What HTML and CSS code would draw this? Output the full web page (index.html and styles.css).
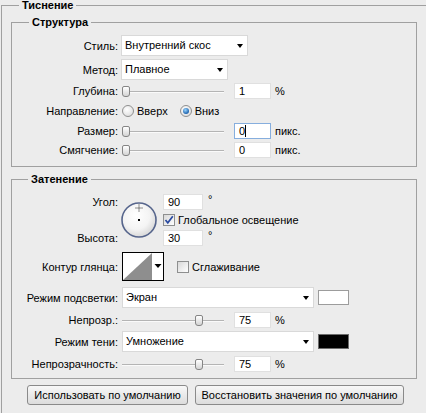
FILE: index.html
```html
<!DOCTYPE html>
<html lang="ru">
<head>
    <meta charset="UTF-8">
    <title>Тиснение</title>
    <link rel="stylesheet" href="styles.css">
</head>
<body>
<fieldset class="group outer">
    <legend>Тиснение</legend>

    <fieldset class="group structure">
        <legend>Структура</legend>

        <div class="row tall">
            <span class="label">Стиль:</span>
            <div class="select style-select">Внутренний скос</div>
        </div>
        <div class="row tall">
            <span class="label">Метод:</span>
            <div class="select method-select">Плавное</div>
        </div>
        <div class="row">
            <span class="label">Глубина:</span>
            <div class="slider"><span class="thumb" style="left:0px"></span></div>
            <span class="field">1</span>
            <span class="unit">%</span>
        </div>
        <div class="row radios">
            <span class="label">Направление:</span>
            <span class="radio"></span><span class="opt">Вверх</span>
            <span class="radio on"></span><span class="opt">Вниз</span>
        </div>
        <div class="row">
            <span class="label">Размер:</span>
            <div class="slider"><span class="thumb" style="left:0px"></span></div>
            <span class="field focus">0<i class="caret"></i></span>
            <span class="unit">пикс.</span>
        </div>
        <div class="row">
            <span class="label">Смягчение:</span>
            <div class="slider"><span class="thumb" style="left:0px"></span></div>
            <span class="field">0</span>
            <span class="unit">пикс.</span>
        </div>
    </fieldset>

    <fieldset class="group shading">
        <legend>Затенение</legend>

        <div class="angle">
            <span class="label angle-label">Угол:</span>
            <svg class="dial" width="36" height="36" viewBox="0 0 36 36">
                <defs>
                    <radialGradient id="dialFill" cx="42%" cy="38%" r="65%">
                        <stop offset="0" stop-color="#ffffff"/>
                        <stop offset="0.6" stop-color="#f4f4f4"/>
                        <stop offset="1" stop-color="#d6d6d6"/>
                    </radialGradient>
                </defs>
                <circle cx="18" cy="18" r="17" fill="url(#dialFill)" stroke="#56658c" stroke-width="1.6"/>
                <path d="M18 2.5v7M14.5 6h7" stroke="#222" stroke-width="1" stroke-dasharray="1 1"/>
                <rect x="17" y="17" width="2" height="2" fill="#000"/>
            </svg>
            <div class="row angle-value">
                <span class="field wide">90</span>
                <span class="deg">°</span>
            </div>
            <div class="row global">
                <span class="check on">
                    <svg width="10" height="10" viewBox="0 0 10 10"><path d="M1.5 5l2.3 2.8L8.8 1.2" fill="none" stroke="#2a4aa0" stroke-width="1.7"/></svg>
                </span>
                <span class="opt">Глобальное освещение</span>
            </div>
            <span class="label height-label">Высота:</span>
            <div class="row height-value">
                <span class="field wide">30</span>
                <span class="deg">°</span>
            </div>
        </div>

        <div class="row contour-row">
            <span class="label">Контур глянца:</span>
            <svg class="contour" width="42" height="29" viewBox="0 0 42 29">
                <rect x="0.5" y="0.5" width="41" height="28" fill="#fff" stroke="#000"/>
                <polygon points="1,28 30,1 30,28" fill="#8e8e8e"/>
                <polygon points="32.5,12 39.5,12 36,16" fill="#000"/>
            </svg>
            <span class="check smooth"></span>
            <span class="opt">Сглаживание</span>
        </div>

        <div class="row tall gap6">
            <span class="label">Режим подсветки:</span>
            <div class="select mode-select">Экран</div>
            <span class="swatch"></span>
        </div>
        <div class="row gap4">
            <span class="label">Непрозр.:</span>
            <div class="slider"><span class="thumb" style="left:73px"></span></div>
            <span class="field">75</span>
            <span class="unit">%</span>
        </div>
        <div class="row tall">
            <span class="label">Режим тени:</span>
            <div class="select mode-select">Умножение</div>
            <span class="swatch black"></span>
        </div>
        <div class="row gap4">
            <span class="label">Непрозрачность:</span>
            <div class="slider"><span class="thumb" style="left:73px"></span></div>
            <span class="field">75</span>
            <span class="unit">%</span>
        </div>
    </fieldset>

    <div class="buttons">
        <button class="btn default-btn">Использовать по умолчанию</button>
        <button class="btn reset-btn">Восстановить значения по умолчанию</button>
    </div>
</fieldset>
</body>
</html>
```

FILE: styles.css
```css
body {
    margin: 0;
    background: #ececec;
    font-family: "Liberation Sans", Arial, sans-serif;
    font-size: 11px;
    color: #000;
    overflow: hidden;
}
.group {
    border: 1px solid #a0a0a0;
    margin: 0;
    padding: 0;
    min-inline-size: 0;
}
.group legend {
    font-weight: bold;
    padding: 0 3px;
    line-height: 13px;
    margin-left: 17px;
}
.outer {
    margin: 0 0 0 1px;
    border-right: none;
    border-bottom: none;
    padding: 5px 9px 9px 9px;
}
.outer > legend {
    line-height: 11px;
    margin-left: 8px;
}
.structure {
    padding: 6px 0 8px;
}
.shading {
    margin-top: 6px;
    padding: 8px 0 6px;
}
.shading > legend {
    margin-left: 16px;
}
.row {
    display: flex;
    align-items: center;
    height: 16px;
}
.row + .row {
    margin-top: 3px;
}
.row.tall {
    height: 21px;
}
.row.radios {
    height: 18px;
}
.row.gap4 {
    margin-top: 4px;
}
.row.gap6 {
    margin-top: 6px;
}
.label {
    width: 106px;
    margin-right: 3px;
    text-align: right;
    flex: none;
    white-space: nowrap;
}
.select {
    position: relative;
    height: 21px;
    box-sizing: border-box;
    background: #fff;
    border: 1px solid #d9d9d9;
    padding-left: 3px;
    line-height: 19px;
    flex: none;
}
.select::after {
    content: "";
    position: absolute;
    right: 4px;
    top: 8px;
    border-left: 3.5px solid transparent;
    border-right: 3.5px solid transparent;
    border-top: 4px solid #000;
}
.style-select {
    width: 127px;
}
.method-select {
    width: 107px;
}
.mode-select {
    width: 192px;
    margin-left: 1px;
}
.slider {
    position: relative;
    width: 102px;
    height: 16px;
    margin-left: 1px;
    flex: none;
}
.slider::before {
    content: "";
    position: absolute;
    left: 0;
    right: 0;
    top: 8px;
    height: 1px;
    background: #b4b4b4;
    border-bottom: 1px solid #fafafa;
}
.thumb {
    position: absolute;
    top: 3px;
    width: 6px;
    height: 9px;
    border: 1px solid #858585;
    border-radius: 2px 2px 3px 3px;
    background: linear-gradient(#ffffff, #d4d4d4);
}
.field {
    width: 37px;
    height: 16px;
    box-sizing: border-box;
    background: #fff;
    border: 1px solid #e0e0e0;
    padding-left: 4px;
    line-height: 14px;
    margin-left: 10px;
    flex: none;
}
.field.wide {
    width: 40px;
    margin-left: 0;
}
.field.focus {
    border-color: #86aede;
}
.caret {
    display: inline-block;
    width: 1px;
    height: 12px;
    background: #000;
    vertical-align: -2px;
}
.unit {
    margin-left: 4px;
}
.deg {
    margin-left: 5px;
    align-self: flex-start;
    line-height: 10px;
}
.radio {
    width: 12px;
    height: 12px;
    box-sizing: border-box;
    border-radius: 50%;
    border: 1px solid #8f8f8f;
    background: radial-gradient(circle at 40% 35%, #ffffff, #d6d6d6);
    display: flex;
    align-items: center;
    justify-content: center;
    flex: none;
    margin-left: 1px;
}
.radio.on::after {
    content: "";
    width: 6px;
    height: 6px;
    border-radius: 50%;
    background: radial-gradient(circle at 40% 35%, #9ad6ff, #1d62ad 70%);
}
.opt {
    margin-left: 3px;
}
.radios .opt + .radio {
    margin-left: 12px;
}
.check {
    width: 12px;
    height: 12px;
    box-sizing: border-box;
    border: 1px solid #8e8f8f;
    background: linear-gradient(135deg, #d8d8d8, #ffffff);
    display: flex;
    align-items: center;
    justify-content: center;
    flex: none;
}
.angle {
    display: grid;
    grid-template-columns: 109px 42px auto;
    grid-template-rows: 16px 20px 16px;
}
.angle-label {
    grid-column: 1;
    grid-row: 1;
    align-self: center;
}
.height-label {
    grid-column: 1;
    grid-row: 3;
    align-self: center;
}
.dial {
    grid-column: 2;
    grid-row: 1 / 4;
    margin-top: 8px;
}
.angle .row {
    margin-top: 0;
    height: auto;
}
.angle-value {
    grid-column: 3;
    grid-row: 1;
}
.global {
    grid-column: 3;
    grid-row: 2;
}
.height-value {
    grid-column: 3;
    grid-row: 3;
}
.row.contour-row {
    height: 29px;
    margin-top: 6px;
}
.contour {
    margin-left: 1px;
    flex: none;
}
.smooth {
    margin-left: 13px;
}
.swatch {
    width: 31px;
    height: 15px;
    box-sizing: border-box;
    margin-left: 4px;
    border: 1px solid #9c9c9c;
    background: #fff;
}
.swatch.black {
    background: #000;
    border-color: #6c6c6c;
}
.buttons {
    display: flex;
    gap: 7px;
    margin: 6px 0 0 16px;
}
.btn {
    height: 20px;
    box-sizing: border-box;
    border: 1px solid #8a8a8a;
    border-radius: 3px;
    background: linear-gradient(#f8f8f8, #dcdcdc);
    font: inherit;
    color: #000;
    padding: 0;
}
.default-btn {
    width: 161px;
}
.reset-btn {
    width: 209px;
}
```
